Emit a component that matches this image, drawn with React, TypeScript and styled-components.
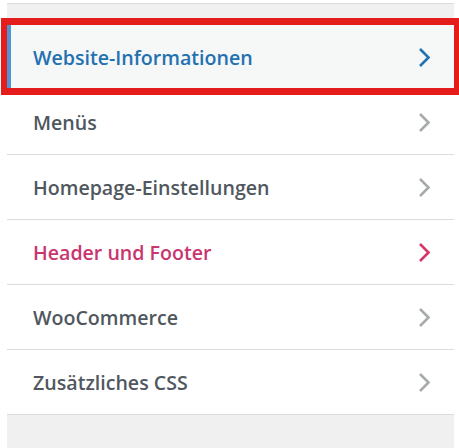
import React from "react";
import styled, { createGlobalStyle } from "styled-components";

const GlobalStyle = createGlobalStyle`
  html, body {
    margin: 0;
    padding: 0;
    background: #ffffff;
  }
  body {
    font-family: "Open Sans", "Noto Sans", "Liberation Sans", sans-serif;
  }
`;

type Tone = "active" | "normal" | "pink";

const colors: Record<Tone, { text: string; chevron: string }> = {
  active: { text: "#2271b1", chevron: "#2271b1" },
  normal: { text: "#50575e", chevron: "#a7aaad" },
  pink: { text: "#c9356e", chevron: "#d63668" },
};

const sections: { title: string; tone: Tone }[] = [
  { title: "Website-Informationen", tone: "active" },
  { title: "Menüs", tone: "normal" },
  { title: "Homepage-Einstellungen", tone: "normal" },
  { title: "Header und Footer", tone: "pink" },
  { title: "WooCommerce", tone: "normal" },
  { title: "Zusätzliches CSS", tone: "normal" },
];

const Panel = styled.div`
  margin: 3px 5px 0 7px;
  width: 447px;
  height: 445px;
  box-sizing: border-box;
  border-top: 1px solid #dcdcde;
  background: #f0f0f1;
  padding-top: 21px;
`;

const List = styled.ul`
  list-style: none;
  margin: 0;
  padding: 0;
`;

const Item = styled.li<{ $tone: Tone }>`
  position: relative;
  height: 65px;
  box-sizing: border-box;
  display: flex;
  align-items: center;
  justify-content: space-between;
  padding: 0 23px 0 ${(p) => (p.$tone === "active" ? "22px" : "26px")};
  background: ${(p) => (p.$tone === "active" ? "#f6f7f7" : "#ffffff")};
  border-left: ${(p) => (p.$tone === "active" ? "4px solid #4f94d4" : "none")};
  border-bottom: 1px solid #dcdcde;
  color: ${(p) => colors[p.$tone].text};
  cursor: pointer;
`;

const Highlight = styled.span`
  position: absolute;
  z-index: 2;
  left: -10px;
  right: -6px;
  top: -7px;
  bottom: -6px;
  border: 7px solid #e41c1c;
  border-left-width: 6px;
  border-right-width: 6px;
  pointer-events: none;
`;

const Title = styled.span`
  font-size: 19.6px;
  font-weight: 600;
  line-height: 1;
  margin-top: 1px;
`;

const Chevron = styled.svg`
  width: 13px;
  height: 21px;
  flex: none;
  margin-top: 1px;
`;

export default function App() {
  return (
    <>
      <GlobalStyle />
      <Panel>
        <List>
          {sections.map((s) => (
            <Item key={s.title} $tone={s.tone}>
              {s.tone === "active" && <Highlight />}
              <Title>{s.title}</Title>
              <Chevron viewBox="0 0 13 21">
                <path
                  d="M2 2 L10.5 10.5 L2 19"
                  fill="none"
                  stroke={colors[s.tone].chevron}
                  strokeWidth="2.6"
                />
              </Chevron>
            </Item>
          ))}
        </List>
      </Panel>
    </>
  );
}
